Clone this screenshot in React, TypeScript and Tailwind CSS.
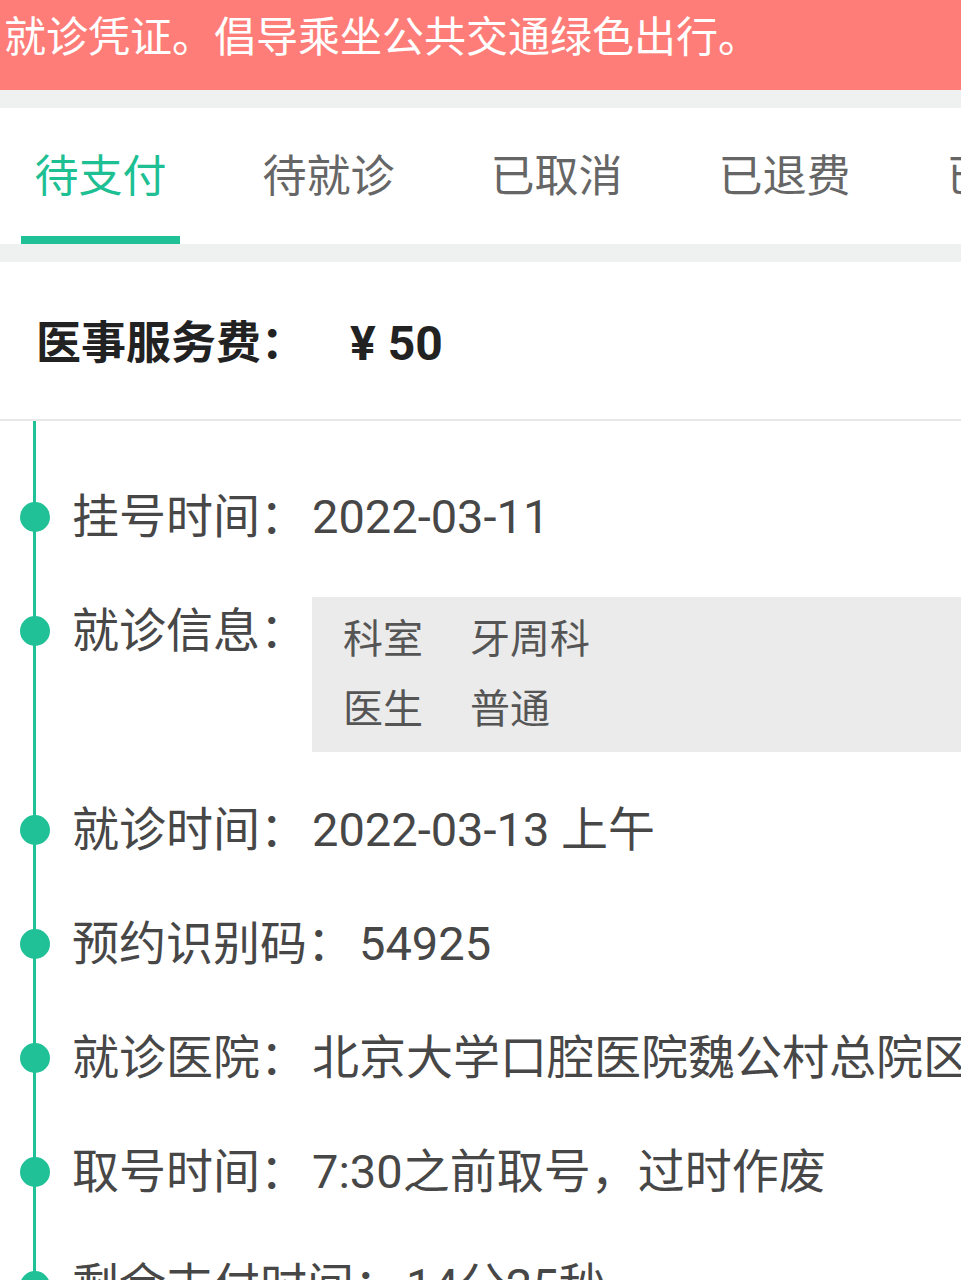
import React from 'react';

const GREEN = '#20c197';

const tabs = ['待支付', '待就诊', '已取消', '已退费', '已完成'];

interface Row {
  label: string;
  value?: string;
  info?: [string, string][];
}

const rows: Row[] = [
  { label: '挂号时间：', value: '2022-03-11' },
  {
    label: '就诊信息：',
    info: [
      ['科室', '牙周科'],
      ['医生', '普通'],
    ],
  },
  { label: '就诊时间：', value: '2022-03-13 上午' },
  { label: '预约识别码：', value: '54925' },
  { label: '就诊医院：', value: '北京大学口腔医院魏公村总院区' },
  { label: '取号时间：', value: '7:30之前取号，过时作废' },
  { label: '剩余支付时间：', value: '14分25秒' },
];

function Dot() {
  return (
    <span className="relative z-10 ml-[20px] h-[30px] w-[30px] flex-none rounded-full bg-[#20c197]" />
  );
}

export default function App() {
  return (
    <div className="h-[1280px] w-[961px] overflow-hidden bg-[#eef1f0] font-['Roboto','Noto_Sans_CJK_SC',sans-serif]">
      {/* notice banner */}
      <div className="h-[90px] overflow-hidden whitespace-nowrap bg-[#fe7d79] pl-[4px] pt-[13px] text-[42px] leading-[50px] text-white">
        就诊凭证。倡导乘坐公共交通绿色出行。
      </div>

      {/* tabs */}
      <div className="mt-[18px] flex h-[136px] gap-[69px] overflow-hidden bg-white pl-[21px]">
        {tabs.map((t, i) => (
          <div
            key={t}
            className={`relative flex h-full w-[159px] flex-none items-center justify-center pt-[2px] text-[44px] ${
              i === 0 ? 'text-[#1dbf93]' : 'text-[#666666]'
            }`}
          >
            {t}
            {i === 0 ? (
              <span className="absolute bottom-0 left-0 h-[8px] w-full bg-[#20c197]" />
            ) : null}
          </div>
        ))}
      </div>

      {/* fee header */}
      <div className="mt-[18px] h-[159px] border-b-2 border-[#e8e8e8] bg-white pl-[36px] pt-[52px]">
        <div className="flex h-[60px] items-center whitespace-nowrap text-[45px] font-bold text-[#222222]">
          <span>医事服务费：</span>
          <span className="ml-[44px] text-[48px]">¥ 50</span>
        </div>
      </div>

      {/* timeline */}
      <div className="relative h-full bg-white pt-[66px]">
        <span className="absolute left-[33px] top-0 h-full w-[3px]" style={{ background: GREEN }} />
        <div className="flex flex-col gap-[54px]">
          {rows.map((r) => (
            <div
              key={r.label}
              className={`flex items-start whitespace-nowrap text-[47px] leading-[60px] text-[#474747] ${
                r.info ? '-mb-[6px]' : 'h-[60px]'
              }`}
            >
              <div className="flex h-[60px] w-[72px] flex-none items-center">
                <Dot />
              </div>
              <span className="flex-none">{r.label}</span>
              {r.info ? (
                <div className="-mt-[4px] ml-[5px] flex-1 bg-[#ebebeb] pb-[7px] pl-[31px] pt-[8px] text-[40px] leading-[70px] text-[#555555]">
                  {r.info.map(([k, v]) => (
                    <div key={k} className="grid h-[70px] grid-cols-[127px_1fr]">
                      <span>{k}</span>
                      <span>{v}</span>
                    </div>
                  ))}
                </div>
              ) : (
                <span className="ml-[5px]">{r.value}</span>
              )}
            </div>
          ))}
        </div>
      </div>
    </div>
  );
}
